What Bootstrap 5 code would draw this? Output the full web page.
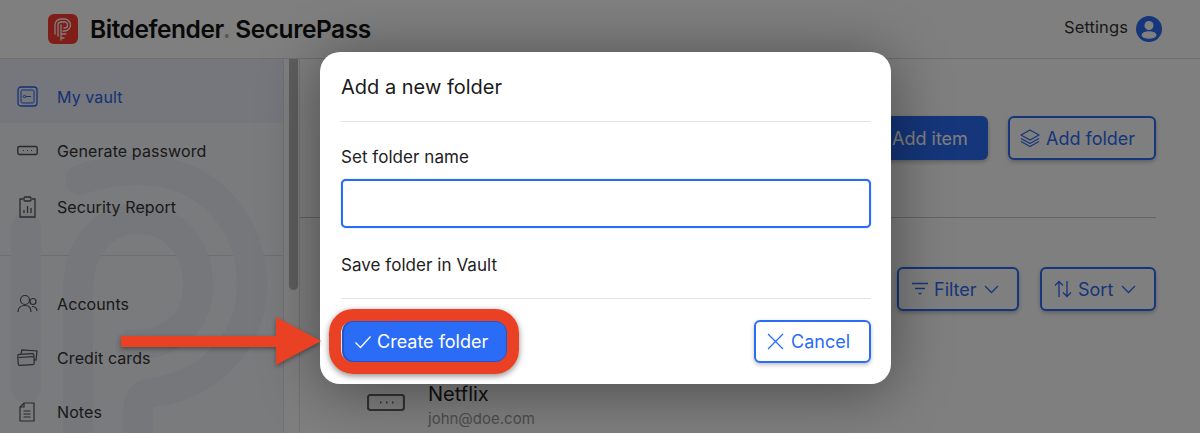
<!DOCTYPE html>
<html lang="en">
<head>
<meta charset="utf-8">
<title>Bitdefender SecurePass</title>
<link href="https://cdn.jsdelivr.net/npm/bootstrap@5.3.0/dist/css/bootstrap.min.css" rel="stylesheet">
<style>
html,body{height:433px;overflow:hidden;margin:0}
body{font-family:Inter,"Liberation Sans",sans-serif;background:#fff;color:#1c1c1c}
.shell{position:relative;width:1200px;height:433px;overflow:hidden}
.topbar{height:59px;border-bottom:1px solid #dcdcdc;padding:0 38px 0 48px}
.logo-mark{width:30px;height:30px;border-radius:6px;background:#ff3a30;flex:none}
.brand{font-family:Inter,sans-serif;font-weight:600;font-size:24.5px;letter-spacing:-.45px;color:#121212;margin-left:12px;white-space:nowrap}
.brand sup{font-size:6px;top:0;margin:0 7px 0 1px;vertical-align:-1px;color:#777}
.settings{font-size:16.5px;letter-spacing:.1px;color:#333;margin-bottom:3px}
.lower{height:374px}
.sidebar{position:relative;width:284px;flex:none;background:#f5f6fa;border-right:1px solid #e4e4e4;overflow:hidden}
.watermark{position:absolute;left:0;top:-59px;width:284px;height:433px}
.side-item{position:relative;height:54px;padding-left:17px;gap:19px;font-size:16px;letter-spacing:.1px;color:#333;white-space:nowrap}
.side-item svg{width:21px;height:24px;flex:none}
.side-active{height:64px;background:#eaeefa;color:#2a62e8;padding-top:11px}
.side-gap{height:1px}
.side-tall{height:58px}
.side-div{border-top:1px solid #dcdcdc;margin:19px 0 21px}
.gutter{width:16px;flex:none;border-right:1px solid #e4e4e4;padding-left:5px}
.thumb{width:9px;height:231px;background:#bcbcbc;border-radius:0 0 5px 5px}
.main{flex:1;padding:57px 44px 0 0;min-width:0}
.action-row{gap:20px;height:44px}
.app-btn{height:44px;border-radius:6px;font-size:18px;letter-spacing:0;padding:0 0 0 12px;box-shadow:0 2px 4px rgba(0,0,0,.25);display:inline-flex;align-items:center;justify-content:flex-start;gap:7px;--bs-btn-border-width:2px;white-space:nowrap}
.btn-fill{background:#2b6cf6;border-color:#2b6cf6;color:#fff}
.btn-line{background:#fff;border-color:#2b6cf6;color:#2b6cf6}
.w-add-item{width:200px;padding-left:102px}.w-add-folder{width:148px;padding-left:10px;gap:6px}.w-filter{width:122px;gap:5px}.w-sort{width:116px;gap:6px}
.main-rule{margin:57px 0 49px;border-top:1px solid #c9c9c9;opacity:1}
.filter-row{gap:21px;height:44px}
.chev{margin-left:2px}
.vault-entry{margin:71px 0 0 67px;gap:23px}
.entry-icon{width:38px;height:17px;flex:none;margin-top:-6px}
.entry-name{font-size:20px;line-height:24px;letter-spacing:0;color:#222}
.entry-mail{font-size:15px;line-height:20px;letter-spacing:0;color:#999;margin-top:3px}
.dimmer{position:absolute;inset:0;background:rgba(0,0,0,.5)}
.folder-dialog{position:absolute;left:320px;top:52px;width:571px;height:332px;border:0;border-radius:20px;padding:0 20px 0 21px;background:#fff;box-shadow:0 6px 60px rgba(0,0,0,.42)}
.dialog-title{font-size:20px;line-height:24px;padding:23px 0 22px;border-bottom:1px solid #e3e3e3;color:#1a1a1a;font-weight:400;margin:0}
.field-label{font-size:17px;line-height:22px;letter-spacing:.05px;color:#222;margin:24px 0 11px}
.name-input{height:49px;border:2px solid #2b6cf6;border-radius:5px;box-shadow:0 0 1px #2b6cf6}
.vault-label{font-size:17px;line-height:22px;letter-spacing:.05px;color:#222;margin:26px 0 22px}
.dialog-foot{border-top:1px solid #e3e3e3;padding-top:21px}
.create-btn{width:166px;height:43px;margin-left:1px;border-radius:12px;gap:5px;padding-left:10px;border-color:#2257cc}
.cancel-btn{width:117px;height:43px;padding-left:11px}
.ring{position:absolute;left:329px;top:309px;width:190px;height:65px;border:12px solid #ea4023;border-radius:24px;box-shadow:0 2px 6px rgba(0,0,0,.45)}
.arrow-mark{position:absolute;left:118px;top:314px;width:206px;height:54px;filter:drop-shadow(0 2px 2px rgba(0,0,0,.35))}
</style>
</head>
<body>
<div class="shell">
  <header class="topbar d-flex align-items-center">
    <div class="logo-mark d-flex align-items-center justify-content-center">
      <svg width="22" height="24" viewBox="0 0 22 24" fill="none" stroke="#fff" stroke-width="1.3" stroke-linecap="round"><path d="M3 17V8a6 6 0 0 1 6-6h3a6 6 0 0 1 1 12h-2"/><path d="M6 19V8a3 3 0 0 1 3-3h3a3 3 0 0 1 1 6h-1"/><path d="M9 8v15M9 17h5M9 21h3"/></svg>
    </div>
    <div class="brand">Bitdefender<sup>®</sup>SecurePass</div>
    <div class="ms-auto d-flex align-items-center gap-2">
      <span class="settings">Settings</span>
      <svg width="26" height="26" viewBox="0 0 26 26"><circle cx="13" cy="13" r="13" fill="#2b6cf6"/><circle cx="13" cy="9.5" r="4.5" fill="#fff"/><ellipse cx="13" cy="19" rx="7.5" ry="3.8" fill="#fff"/></svg>
    </div>
  </header>
  <div class="lower d-flex">
    <nav class="sidebar">
      <svg class="watermark" viewBox="0 0 284 433" fill="none" stroke="#ebeef7" stroke-width="30" stroke-linecap="round"><path d="M26 228V388"/><path d="M78 450V290C78 245 105 219 138 219C172 219 198 245 198 285C198 325 170 345 130 345"/><path d="M80 180C100 172 120 170 140 170C205 170 252 220 252 285C252 345 205 385 155 392C140 394 138 400 138 415V450"/></svg>
      <div class="side-item side-active d-flex align-items-center">
        <svg viewBox="0 0 21 24" fill="none" stroke="#2a62e8"><rect x="1" y="2" width="19" height="19" rx="3" stroke-width="1.3"/><rect x="4" y="5" width="13" height="13" rx="1.5" stroke-width="1"/><circle cx="7.5" cy="11.5" r="1.2"/><path d="M9 11.5h5"/></svg>
        <span>My vault</span>
      </div>
      <div class="side-gap"></div>
      <div class="side-item d-flex align-items-center">
        <svg viewBox="0 0 21 24" fill="none" stroke="#555"><rect x="0.8" y="7.5" width="19.4" height="8" rx="1.5" stroke-width="1.4"/><path d="M6 11.5h1M10 11.5h1M14 11.5h1" stroke-width="1.2"/></svg>
        <span>Generate password</span>
      </div>
      <div class="side-item side-tall d-flex align-items-center">
        <svg viewBox="0 0 21 24" fill="none" stroke="#555" stroke-width="1.3"><path d="M6 4H3v18h15V4h-3"/><rect x="7" y="2" width="7" height="4" rx="1"/><path d="M7 18v-3M10.5 18v-7M14 18v-5"/></svg>
        <span>Security Report</span>
      </div>
      <div class="side-div"></div>
      <div class="side-item d-flex align-items-center">
        <svg viewBox="0 0 21 24" fill="none" stroke="#555" stroke-width="1.2"><circle cx="8" cy="8" r="4.5"/><path d="M1 20c0-4 3-6.500 7-6.500s6 2.500 6 6.500"/><circle cx="16" cy="9.500" r="3"/><path d="M15 14.500c3 0 5 2 5 4.500"/></svg>
        <span>Accounts</span>
      </div>
      <div class="side-item d-flex align-items-center">
        <svg viewBox="0 0 21 24" fill="none" stroke="#555" stroke-width="1.2"><path d="M4 7.500 5 4l15 1-1 9-2-.2"/><rect x="1" y="8" width="16" height="11" rx="1.500" transform="rotate(-3 9 13)"/><path d="M1.500 11.500l15-.8"/></svg>
        <span>Credit cards</span>
      </div>
      <div class="side-item d-flex align-items-center">
        <svg viewBox="0 0 21 24" fill="none" stroke="#555" stroke-width="1.2"><path d="M7 3h10v18H3V7z"/><path d="M7 3v4H3M6.500 11h7M6.500 14h7M6.500 17h7"/></svg>
        <span>Notes</span>
      </div>
    </nav>
    <div class="gutter"><div class="thumb"></div></div>
    <main class="main">
      <div class="action-row d-flex justify-content-end">
        <button class="btn app-btn btn-fill w-add-item" type="button">Add item</button>
        <button class="btn app-btn btn-line w-add-folder" type="button">
          <svg width="20" height="18" viewBox="0 0 20 18" fill="none" stroke="#2b6cf6" stroke-width="1.2" stroke-linejoin="round"><path d="M10 1 19 6l-9 5-9-5z"/><path d="M1 9.500l9 5 9-5M1 12.500l9 5 9-5"/></svg>
          Add folder
        </button>
      </div>
      <hr class="main-rule">
      <div class="filter-row d-flex justify-content-end">
        <button class="btn app-btn btn-line w-filter" type="button">
          <svg width="18" height="14" viewBox="0 0 18 14" fill="none" stroke="#2b6cf6" stroke-width="1.3"><path d="M1 1.500h16M4 6.500h10M7.500 11.500h3"/></svg>
          Filter
          <svg class="chev" width="15" height="9" viewBox="0 0 15 9" fill="none" stroke="#2b6cf6" stroke-width="1.3"><path d="m1 1 6.500 6.500L14 1"/></svg>
        </button>
        <button class="btn app-btn btn-line w-sort" type="button">
          <svg width="18" height="18" viewBox="0 0 18 18" fill="none" stroke="#2b6cf6" stroke-width="1.3"><path d="M5 17V1.500M1 5.500l4-4 4 4M13 1v15.500M9 12.500l4 4 4-4"/></svg>
          Sort
          <svg class="chev" width="15" height="9" viewBox="0 0 15 9" fill="none" stroke="#2b6cf6" stroke-width="1.3"><path d="m1 1 6.500 6.500L14 1"/></svg>
        </button>
      </div>
      <div class="vault-entry d-flex align-items-center">
        <svg class="entry-icon" viewBox="0 0 38 17" fill="none" stroke="#666"><rect x="1" y="1" width="36" height="15" rx="2.500" stroke-width="2.200"/><path d="M13 8.500h1.500M19 8.500h1.500M25 8.500h1.500" stroke-width="1.800"/></svg>
        <div>
          <div class="entry-name">Netflix</div>
          <div class="entry-mail">john@doe.com</div>
        </div>
      </div>
    </main>
  </div>

  <div class="dimmer"></div>

  <div class="modal-content folder-dialog">
    <h5 class="dialog-title">Add a new folder</h5>
    <label class="field-label d-block" for="fname">Set folder name</label>
    <input id="fname" class="form-control name-input" type="text">
    <div class="vault-label">Save folder in Vault</div>
    <div class="dialog-foot d-flex justify-content-between">
      <button class="btn app-btn btn-fill create-btn" type="button">
        <svg width="18" height="14" viewBox="0 0 18 14" fill="none" stroke="#fff" stroke-width="1.3"><path d="m1.500 7.500 5 5L16.500 1.500"/></svg>
        Create folder
      </button>
      <button class="btn app-btn btn-line cancel-btn" type="button">
        <svg width="17" height="17" viewBox="0 0 17 17" fill="none" stroke="#2b6cf6" stroke-width="1.3"><path d="m1 1 15 15M16 1 1 16"/></svg>
        Cancel
      </button>
    </div>
  </div>

  <div class="ring"></div>
  <svg class="arrow-mark" viewBox="0 0 206 54" fill="#ea4023"><path d="M3 22h155V3l45 24-45 24V33H3z"/></svg>
</div>
<script src="https://cdn.jsdelivr.net/npm/bootstrap@5.3.0/dist/js/bootstrap.bundle.min.js"></script>
</body>
</html>
